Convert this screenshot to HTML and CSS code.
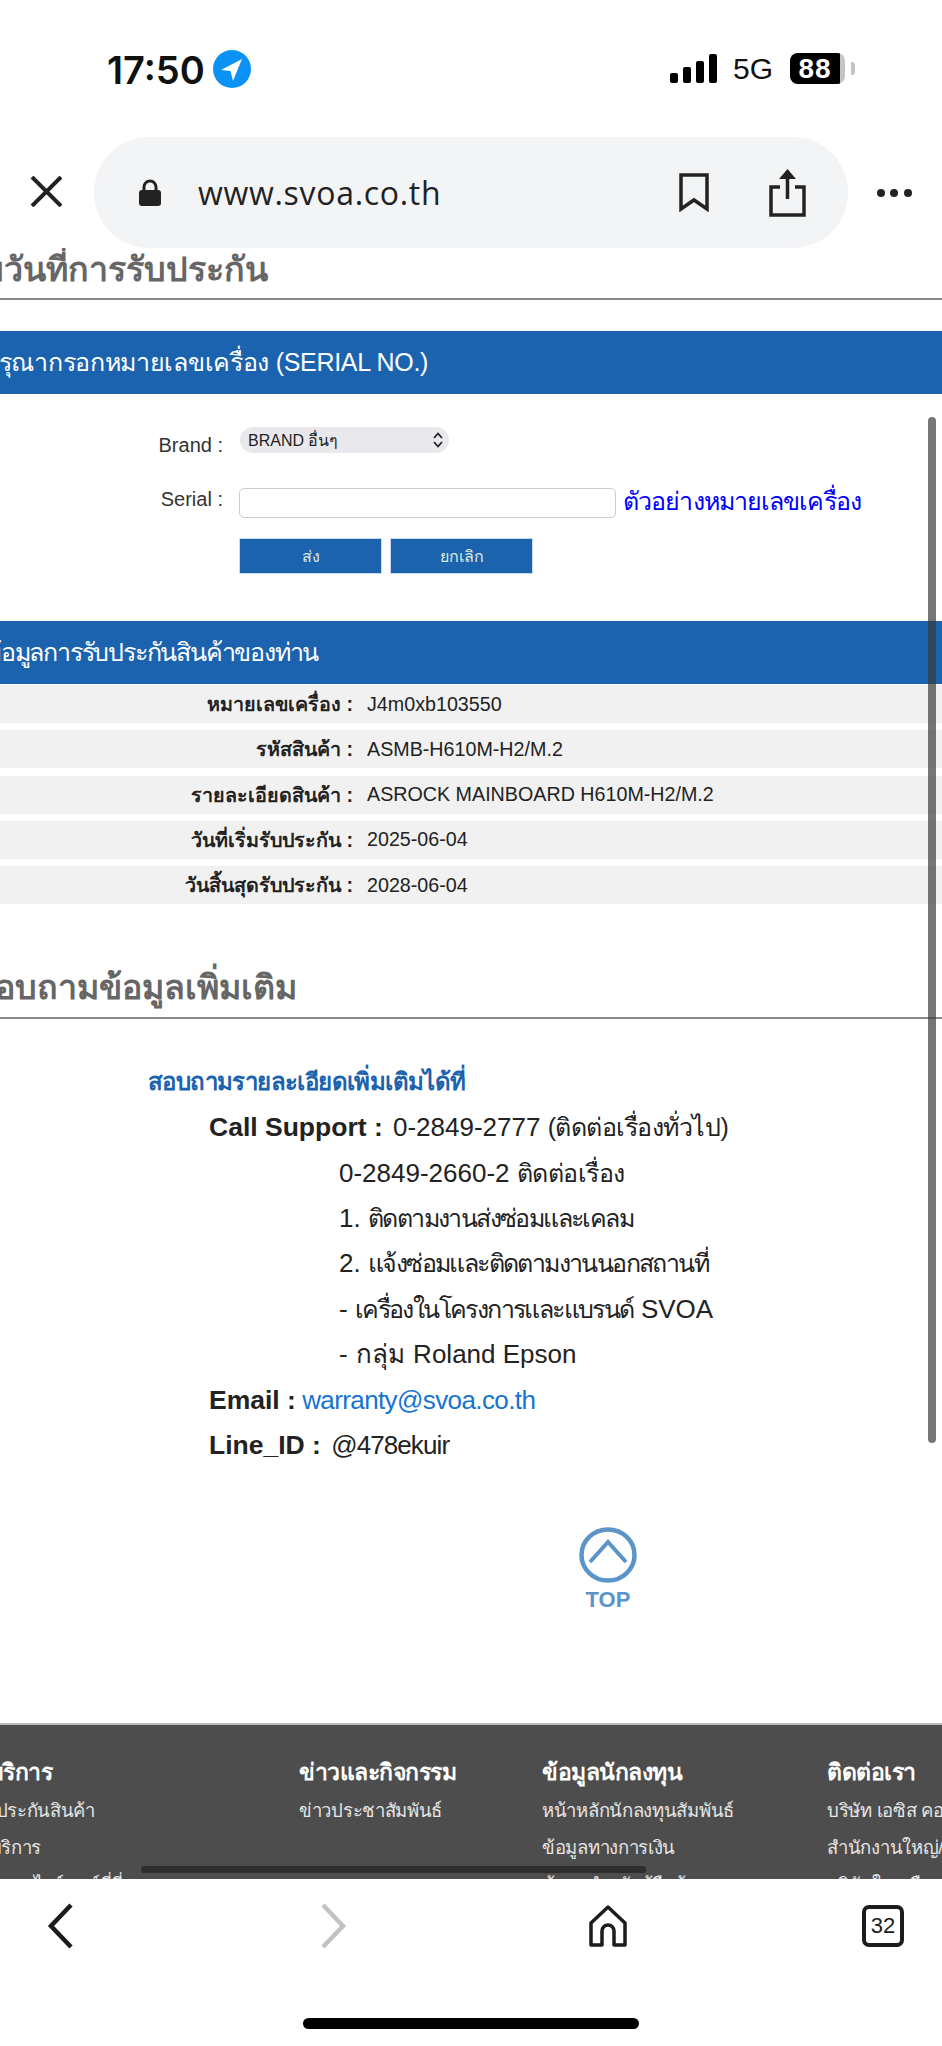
FILE: index.html
```html
<!DOCTYPE html>
<html lang="th">
<head>
    <meta charset="UTF-8">
    <meta name="viewport" content="width=device-width, initial-scale=1.0">
    <title>ตรวจสอบวันที่การรับประกัน</title>
    <link rel="stylesheet" href="styles.css">
</head>
<body>
    <div class="status-bar">
        <div class="status-left">
            <span class="clock">17:50</span>
            <svg class="location" viewBox="0 0 38 38"><circle cx="19" cy="19" r="19" fill="#0a93f5"/><path d="M8 20 L29 9 L20 31 L17.5 21 Z" fill="#fff"/></svg>
        </div>
        <div class="status-right">
            <svg class="signal" viewBox="0 0 47 29"><rect x="0" y="19" width="8" height="10" rx="2"/><rect x="13" y="13" width="8" height="16" rx="2"/><rect x="26" y="7" width="8" height="22" rx="2"/><rect x="39" y="0" width="8" height="29" rx="2"/></svg>
            <span class="network">5G</span>
            <div class="battery"><span class="battery-level">88</span><span class="battery-rest"></span></div>
            <span class="battery-nub"></span>
        </div>
    </div>

    <div class="browser-bar">
        <svg class="close-icon" viewBox="0 0 33 31"><path d="M2 1 L31 30 M31 1 L2 30" stroke="#222" stroke-width="4" fill="none"/></svg>
        <div class="url-pill">
            <svg class="lock-icon" viewBox="0 0 22 27"><path d="M5 12 V8 a6 6 0 0 1 12 0 V12" stroke="#222" stroke-width="3" fill="none"/><rect x="0" y="11" width="22" height="16" rx="3" fill="#222"/></svg>
            <span class="url-text">www.svoa.co.th</span>
            <svg class="bookmark-icon" viewBox="0 0 30 39"><path d="M2 2 H28 V36 L15 27 L2 36 Z" stroke="#222" stroke-width="3.5" fill="none"/></svg>
            <svg class="share-icon" viewBox="0 0 37 49"><path d="M18.5 3 V31" stroke="#222" stroke-width="3.5"/><path d="M10 11 L18.5 1 L27 11 Z" fill="#222"/><path d="M11 19 H2 V47 H35 V19 H26" stroke="#222" stroke-width="3.5" fill="none"/></svg>
        </div>
        <div class="more-dots"><span></span><span></span><span></span></div>
    </div>

    <div class="web-view">
        <div class="page">
            <h2 class="section-title title-warranty">ตรวจสอบวันที่การรับประกัน</h2>

            <div class="blue-bar bar-serial">กรุณากรอกหมายเลขเครื่อง (SERIAL NO.)</div>

            <form class="serial-form">
                <label class="form-label label-brand">Brand :</label>
                <div class="select-box">
                    <span>BRAND อื่นๆ</span>
                    <svg class="select-arrows" viewBox="0 0 12 18"><path d="M2 7 L6 2.5 L10 7 M2 11 L6 15.5 L10 11" stroke="#222" stroke-width="1.8" fill="none"/></svg>
                </div>
                <label class="form-label label-serial">Serial :</label>
                <div class="serial-row">
                    <input class="serial-input" type="text">
                    <a class="example-link">ตัวอย่างหมายเลขเครื่อง</a>
                </div>
                <div class="form-buttons">
                    <button type="button" class="form-button">ส่ง</button>
                    <button type="button" class="form-button">ยกเลิก</button>
                </div>
            </form>

            <div class="blue-bar bar-result">ข้อมูลการรับประกันสินค้าของท่าน</div>

            <div class="result-list">
                <div class="result-row"><b>หมายเลขเครื่อง :</b><span>J4m0xb103550</span></div>
                <div class="result-row"><b>รหัสสินค้า :</b><span>ASMB-H610M-H2/M.2</span></div>
                <div class="result-row"><b>รายละเอียดสินค้า :</b><span>ASROCK MAINBOARD H610M-H2/M.2</span></div>
                <div class="result-row"><b>วันที่เริ่มรับประกัน :</b><span>2025-06-04</span></div>
                <div class="result-row"><b>วันสิ้นสุดรับประกัน :</b><span>2028-06-04</span></div>
            </div>

            <h2 class="section-title title-contact">สอบถามข้อมูลเพิ่มเติม</h2>

            <div class="contact">
                <h3 class="contact-title">สอบถามรายละเอียดเพิ่มเติมได้ที่</h3>
                <p><b>Call Support :</b> 0-2849-2777 <span class="th-short">(ติดต่อเรื่องทั่วไป)</span></p>
                <p class="indent">0-2849-2660-2 <span class="th-short">ติดต่อเรื่อง</span></p>
                <p class="indent">1. <span class="th">ติดตามงานส่งซ่อมและเคลม</span></p>
                <p class="indent">2. <span class="th">แจ้งซ่อมและติดตามงานนอกสถานที่</span></p>
                <p class="indent">- <span class="th">เครื่องในโครงการและแบรนด์</span> SVOA</p>
                <p class="indent">- <span class="th-word">กลุ่ม</span> Roland Epson</p>
                <p><b>Email :</b> <a class="mail-link">warranty@svoa.co.th</a></p>
                <p><b>Line_ID :</b> <span class="line-id">@478ekuir</span></p>
            </div>

            <a class="to-top">
                <svg class="to-top-icon" viewBox="0 0 58 56"><ellipse cx="29" cy="28" rx="26.5" ry="25.5" stroke="#5b94c9" stroke-width="4.5" fill="none"/><path d="M11 35 L29 15 L47 35" stroke="#5b94c9" stroke-width="4" fill="none"/></svg>
                <span>TOP</span>
            </a>

            <footer class="site-footer">
                <div class="footer-col col-service">
                    <h4>ศูนย์บริการ</h4>
                    <p class="item-warranty">เช็ครับประกันสินค้า</p>
                    <p class="item-center">ศูนย์ให้บริการ</p>
                    <p>ดาวน์โหลดไดร์เวอร์ที่นี่</p>
                </div>
                <div class="footer-col col-news">
                    <h4>ข่าวและกิจกรรม</h4>
                    <p>ข่าวประชาสัมพันธ์</p>
                </div>
                <div class="footer-col col-invest">
                    <h4>ข้อมูลนักลงทุน</h4>
                    <p>หน้าหลักนักลงทุนสัมพันธ์</p>
                    <p>ข้อมูลทางการเงิน</p>
                    <p>ข้อมูลสำหรับผู้ถือหุ้น</p>
                </div>
                <div class="footer-col col-contact">
                    <h4>ติดต่อเรา</h4>
                    <p>บริษัท เอซิส คอร์ปอเรชั่น จำกัด</p>
                    <p>สำนักงานใหญ่/สาขา</p>
                    <p>บริษัทในเครือ</p>
                </div>
            </footer>
        </div>

        <div class="scroll-thumb-y"></div>
        <div class="scroll-thumb-x"></div>
    </div>

    <div class="toolbar">
        <div class="toolbar-icons">
            <svg class="nav-icon" viewBox="0 0 27 46"><path d="M24 2 L4 23 L24 44" stroke="#1c1c1c" stroke-width="4.5" fill="none"/></svg>
            <svg class="nav-icon nav-forward" viewBox="0 0 27 46"><path d="M3 2 L23 23 L3 44" stroke="#bfc3c6" stroke-width="4.5" fill="none"/></svg>
            <svg class="home-icon" viewBox="0 0 38 42"><path d="M2 18 L19 2 L36 18 V40 H25 V26 a6 6 0 0 0 -12 0 V40 H2 Z" stroke="#1c1c1c" stroke-width="3.5" fill="none" stroke-linejoin="round"/></svg>
            <div class="tab-count">32</div>
        </div>
        <div class="home-indicator"></div>
    </div>
</body>
</html>
```

FILE: styles.css
```css
* {
    box-sizing: border-box;
}
html, body {
    margin: 0;
    height: 100%;
}
body {
    width: 942px;
    height: 2046px;
    display: flex;
    flex-direction: column;
    overflow: hidden;
    background: white;
    font-family: 'Liberation Sans', 'Noto Sans', 'DejaVu Sans', sans-serif;
    color: #222;
}

/* phone status bar */
.status-bar {
    height: 137px;
    flex: none;
    display: flex;
    justify-content: space-between;
    padding: 50px 87px 0 107px;
}
.status-left {
    display: flex;
    align-items: flex-start;
    gap: 8px;
}
.clock {
    font-family: 'Inter', sans-serif;
    font-size: 38px;
    font-weight: 600;
    line-height: 40px;
    color: #111;
}
.location {
    width: 38px;
    height: 38px;
}
.status-right {
    display: flex;
    align-items: flex-start;
    padding-top: 3px;
}
.signal {
    width: 47px;
    height: 29px;
    margin-top: 1px;
}
.network {
    font-size: 30px;
    line-height: 32px;
    margin-left: 16px;
    color: #111;
}
.battery {
    display: flex;
    width: 55px;
    height: 31px;
    margin-left: 17px;
    border-radius: 8px;
    overflow: hidden;
    background: #c4c4c4;
}
.battery-level {
    width: 50px;
    background: #000;
    color: white;
    font-size: 28px;
    font-weight: bold;
    letter-spacing: 1px;
    line-height: 31px;
    text-align: center;
}
.battery-nub {
    width: 4px;
    height: 13px;
    margin: 9px 0 0 6px;
    border-radius: 0 3px 3px 0;
    background: #c4c4c4;
}

/* browser address bar */
.browser-bar {
    height: 111px;
    flex: none;
    display: flex;
    align-items: center;
    padding-left: 30px;
}
.close-icon {
    width: 33px;
    height: 31px;
    margin: 0 31px 3px 0;
}
.url-pill {
    width: 754px;
    height: 111px;
    display: flex;
    align-items: center;
    padding-left: 45px;
    border-radius: 55px;
    background: #f3f4f6;
}
.lock-icon {
    width: 22px;
    height: 27px;
}
.url-text {
    width: 481px;
    margin-left: 37px;
    font-family: 'Open Sans', sans-serif;
    font-size: 32px;
    color: #222;
    letter-spacing: 0.7px;
}
.bookmark-icon {
    width: 30px;
    height: 39px;
}
.share-icon {
    width: 37px;
    height: 49px;
    margin-left: 60px;
}
.more-dots {
    display: flex;
    gap: 5px;
    margin-left: 29px;
}
.more-dots span {
    width: 8px;
    height: 8px;
    border-radius: 50%;
    background: #222;
}
.more-dots span:last-child {
    margin-left: 1px;
}

/* scrolled web page */
.web-view {
    position: relative;
    flex: 1;
    min-height: 0;
    overflow: hidden;
}
.page {
    width: 1300px;
}
.section-title {
    margin: 0;
    height: 52px;
    border-bottom: 2px solid #888;
    font-size: 34px;
    line-height: 36px;
    font-weight: bold;
    color: #666;
}
.title-warranty {
    padding: 3px 0 0 0;
    margin-left: -138px;
}
.title-contact {
    height: 86px;
    margin: 29px 0 0 -26px;
    padding-top: 36px;
}
.blue-bar {
    height: 63px;
    padding-top: 16px;
    background: #1b63ae;
    color: white;
    font-size: 25px;
    line-height: 30px;
}
.bar-serial {
    margin-top: 31px;
    letter-spacing: -0.3px;
    text-indent: -16px;
}
.bar-result {
    letter-spacing: -1.2px;
    text-indent: -15px;
}
.serial-form {
    display: grid;
    grid-template-columns: 240px 1fr;
    padding-top: 33px;
    height: 227px;
    grid-template-rows: 26px 67px auto;
}
.form-label {
    font-size: 20px;
    text-align: right;
    padding-right: 17px;
    color: #333;
}
.label-brand {
    padding-top: 7px;
}
.label-serial {
    padding-top: 35px;
}
.select-box {
    width: 209px;
    height: 26px;
    display: flex;
    align-items: center;
    justify-content: space-between;
    padding: 0 5px 0 8px;
    border-radius: 13px;
    background: #e9e9ed;
    font-size: 16px;
}
.select-arrows {
    width: 12px;
    height: 18px;
}
.serial-row {
    display: flex;
    align-items: flex-start;
    padding-top: 35px;
    margin-left: -1px;
}
.serial-input {
    width: 377px;
    height: 30px;
    border: 1px solid #ccc;
    border-radius: 5px;
    background: white;
}
.example-link {
    margin-left: 7px;
    margin-top: -4px;
    font-size: 25px;
    letter-spacing: -0.9px;
    line-height: 34px;
    color: #0000ff;
}
.form-buttons {
    grid-column: 2;
    display: flex;
    gap: 8px;
    padding-top: 18px;
    margin-left: -1px;
}
.form-button {
    width: 143px;
    height: 36px;
    border: 1px solid #c9dcee;
    background: #1b63ae;
    color: #dfe9d8;
    font-family: inherit;
    font-size: 16px;
    padding: 0;
}
.result-list {
    display: flex;
    flex-direction: column;
    gap: 7.3px;
    padding-top: 1px;
}
.result-row {
    display: grid;
    grid-template-columns: 353px 1fr;
    column-gap: 14px;
    height: 38px;
    align-items: center;
    background: #f1f1f1;
    font-size: 19.7px;
    color: #222;
}
.result-row b {
    text-align: right;
}

/* contact block */
.contact {
    padding: 42px 0 0 209px;
    height: 508px;
}
.contact-title {
    margin: 0 0 2px -61px;
    font-size: 24px;
    letter-spacing: -0.6px;
    line-height: 42px;
    font-weight: bold;
    color: #1b63ae;
}
.contact p {
    margin: 0;
    height: 45.4px;
    font-size: 26px;
    line-height: 45px;
    color: #222;
}
.contact p b {
    margin-right: 3px;
    font-size: 26.5px;
}
.contact .indent {
    padding-left: 130px;
}
.th {
    font-size: 25px;
    letter-spacing: -1.6px;
}
.th-short {
    font-size: 25px;
    letter-spacing: -0.5px;
}
.th-word {
    margin: 0 1px;
}
.mail-link {
    margin-left: -4px;
    color: #1673d1;
    letter-spacing: -0.6px;
}
.line-id {
    letter-spacing: -0.9px;
}
.to-top {
    display: flex;
    flex-direction: column;
    align-items: center;
    width: 58px;
    margin-left: 579px;
    color: #5b94c9;
    font-size: 22px;
    font-weight: bold;
    line-height: 24px;
}
.to-top-icon {
    width: 58px;
    height: 56px;
    margin-bottom: 5px;
}

/* footer, cut by the toolbar */
.site-footer {
    margin-top: 111px;
    height: 200px;
    display: flex;
    padding-top: 33px;
    border-top: 2px solid #bbb;
    background: #4d4d4d;
    color: white;
}
.footer-col h4 {
    margin: 0 0 6px;
    font-size: 23px;
    letter-spacing: -0.5px;
    line-height: 28px;
    font-weight: bold;
}
.footer-col p {
    margin: 0;
    font-size: 18.5px;
    letter-spacing: -0.3px;
    line-height: 37px;
    color: #e6e6e6;
}
.col-service {
    width: 353px;
    margin-left: -54px;
    flex: none;
}
.footer-col .item-warranty {
    margin-left: -2px;
}
.footer-col .item-center {
    margin-left: -12px;
}
.col-news {
    width: 243px;
    flex: none;
}
.col-invest {
    width: 285px;
    flex: none;
}

/* overlay scrollbars of the web view */
.scroll-thumb-y {
    position: absolute;
    left: 928px;
    top: 169px;
    width: 8px;
    height: 1026px;
    border-radius: 4px;
    background: rgba(60, 60, 60, 0.7);
}
.scroll-thumb-x {
    position: absolute;
    left: 141px;
    top: 1618px;
    width: 505px;
    height: 7px;
    border-radius: 3px;
    background: #2e2e2e;
}

/* bottom toolbar */
.toolbar {
    height: 167px;
    flex: none;
    background: white;
}
.toolbar-icons {
    display: flex;
    align-items: center;
    height: 46px;
    margin-top: 24px;
    padding-left: 47px;
}
.nav-icon {
    width: 27px;
    height: 46px;
}
.nav-forward {
    margin-left: 246px;
}
.home-icon {
    width: 38px;
    height: 42px;
    margin-left: 242px;
}
.tab-count {
    width: 42px;
    height: 42px;
    margin-left: 235px;
    border: 4px solid #1c1c1c;
    border-radius: 7px;
    font-size: 22px;
    line-height: 34px;
    text-align: center;
    color: #1c1c1c;
}
.home-indicator {
    width: 336px;
    height: 11px;
    margin: 69px 0 0 303px;
    border-radius: 6px;
    background: #000;
}
```
